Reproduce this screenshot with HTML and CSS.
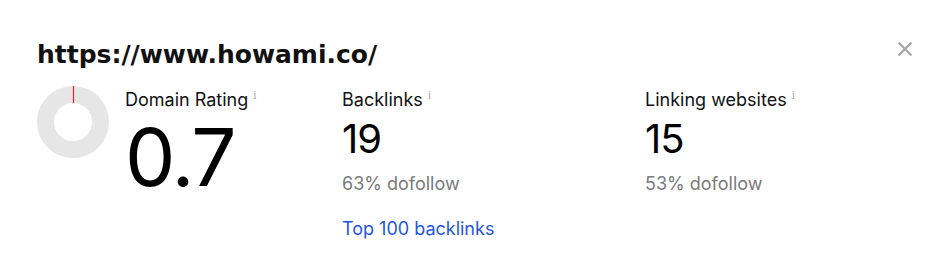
FILE: index.html
```html
<!DOCTYPE html>
<html lang="en">
<head>
    <meta charset="UTF-8">
    <meta name="viewport" content="width=device-width, initial-scale=1.0">
    <link rel="stylesheet" href="styles.css">
    <title>Domain overview</title>
</head>
<body>

    <div class="card">
        <header class="card-head">
            <h1 class="site-url">https://www.howami.co/</h1>
            <button class="close" type="button" aria-label="Close">
                <svg width="16" height="16" viewBox="0 0 16 16">
                    <path d="M1.5 1.5 L14.5 14.5 M14.5 1.5 L1.5 14.5" stroke="#a9a9a9" stroke-width="2.4" fill="none"/>
                </svg>
            </button>
        </header>

        <div class="stats">
            <svg class="donut" width="72" height="72" viewBox="0 0 72 72">
                <circle cx="36" cy="36" r="27.5" fill="none" stroke="#e6e6e6" stroke-width="17"/>
                <line x1="36.5" y1="0" x2="36.5" y2="17" stroke="#e0262e" stroke-width="1.2"/>
            </svg>

            <div class="stat stat-dr">
                <div class="label">Domain Rating<span class="info">i</span></div>
                <div class="big">0.7</div>
            </div>

            <div class="stat stat-bl">
                <div class="label">Backlinks<span class="info">i</span></div>
                <div class="num">19</div>
                <div class="sub">63% dofollow</div>
                <a class="more" href="#">Top 100 backlinks</a>
            </div>

            <div class="stat">
                <div class="label">Linking websites<span class="info">i</span></div>
                <div class="num">15</div>
                <div class="sub">53% dofollow</div>
            </div>
        </div>
    </div>

</body>
</html>
```

FILE: styles.css
```css
body {
    margin: 0;
    background-color: #fff;
    font-family: Inter, "Liberation Sans", sans-serif;
    color: #000;
}

.card {
    padding: 40px 38px 0 37px;
}

.card-head {
    display: flex;
    justify-content: space-between;
    align-items: flex-start;
}

.site-url {
    margin: 0;
    font-family: "DejaVu Sans", sans-serif;
    font-weight: bold;
    font-size: 25px;
    line-height: 30px;
    color: #111;
}

.close {
    margin-top: 1px;
    padding: 0;
    border: none;
    background: none;
    width: 16px;
    height: 16px;
    cursor: pointer;
}

.close svg {
    display: block;
}

.stats {
    display: flex;
    align-items: flex-start;
    margin-top: 16px;
}

.donut {
    display: block;
    flex: none;
    margin-right: 16px;
}

.stat {
    padding-top: 4px;
}

.stat-dr {
    width: 217px;
}

.stat-bl {
    width: 303px;
}

.label {
    font-size: 18px;
    line-height: 20px;
    color: #111;
}

.info {
    font-family: "Liberation Serif", serif;
    font-size: 12px;
    color: #aaa;
    margin-left: 5px;
    vertical-align: top;
    line-height: 11px;
}

.big {
    margin-top: 8px;
    font-size: 80px;
    line-height: 78px;
    letter-spacing: -2px;
}

.num {
    margin-top: 9px;
    font-size: 40px;
    line-height: 40px;
    letter-spacing: -1px;
}

.sub {
    margin-top: 15px;
    font-size: 18px;
    line-height: 20px;
    color: #7a7a7a;
}

.more {
    display: inline-block;
    margin-top: 25px;
    font-size: 18px;
    line-height: 20px;
    color: #1f57e0;
    text-decoration: none;
}
```
